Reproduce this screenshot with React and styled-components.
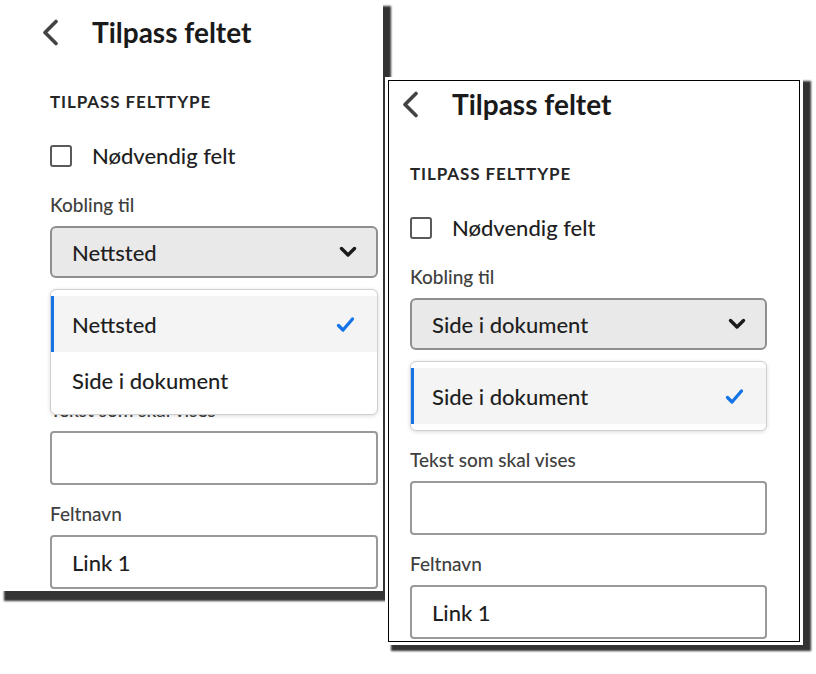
import styled, { createGlobalStyle } from "styled-components";

const GlobalStyle = createGlobalStyle`
  html, body {
    margin: 0;
    padding: 0;
    background: #ffffff;
  }
  * {
    box-sizing: border-box;
  }
`;

const panels = [
  {
    id: "left",
    selected: "Nettsted",
    options: ["Nettsted", "Side i dokument"],
    gapAfterSelect: 120,
  },
  {
    id: "right",
    selected: "Side i dokument",
    options: ["Side i dokument"],
    gapAfterSelect: 98,
  },
];

function BackIcon() {
  return (
    <svg width="16" height="27" viewBox="0 0 16 27">
      <path
        d="M14 2.5 L3 13.5 L14 24.5"
        fill="none"
        stroke="#444444"
        strokeWidth="3.6"
        strokeLinecap="round"
        strokeLinejoin="round"
      />
    </svg>
  );
}

function ChevronDown() {
  return (
    <svg width="18" height="12" viewBox="0 0 18 12">
      <path
        d="M2.5 2.5 L9 9 L15.5 2.5"
        fill="none"
        stroke="#1b1b1b"
        strokeWidth="3.4"
        strokeLinecap="round"
        strokeLinejoin="round"
      />
    </svg>
  );
}

function CheckMark() {
  return (
    <svg width="19" height="17" viewBox="0 0 19 17">
      <path
        d="M2.5 9.5 L7 14 L16.5 3"
        fill="none"
        stroke="#1473e6"
        strokeWidth="3.3"
        strokeLinecap="round"
        strokeLinejoin="round"
      />
    </svg>
  );
}

function FieldPanel({ variant, selected, options, gapAfterSelect }) {
  return (
    <Panel $variant={variant}>
      <Header>
        <BackIcon />
        <Title>Tilpass feltet</Title>
      </Header>

      <SectionTitle>TILPASS FELTTYPE</SectionTitle>

      <CheckRow>
        <CheckBox />
        <CheckLabel>Nødvendig felt</CheckLabel>
      </CheckRow>

      <Label $top={24}>Kobling til</Label>
      <SelectWrap>
        <SelectBox>
          <span>{selected}</span>
          <ChevronDown />
        </SelectBox>
        <Menu>
          {options.map((option) => (
            <MenuItem key={option} $active={option === selected}>
              <span>{option}</span>
              {option === selected && <CheckMark />}
            </MenuItem>
          ))}
        </Menu>
      </SelectWrap>

      <Label $top={gapAfterSelect}>Tekst som skal vises</Label>
      <TextInput />

      <Label $top={17}>Feltnavn</Label>
      <TextInput>Link 1</TextInput>
    </Panel>
  );
}

export default function App() {
  return (
    <Stage>
      <GlobalStyle />
      {panels.map((panel) => (
        <FieldPanel
          key={panel.id}
          variant={panel.id}
          selected={panel.selected}
          options={panel.options}
          gapAfterSelect={panel.gapAfterSelect}
        />
      ))}
    </Stage>
  );
}

const Stage = styled.div`
  position: relative;
  width: 816px;
  height: 674px;
  overflow: hidden;
  background: #ffffff;
  font-family: "Lato", "Open Sans", sans-serif;
  font-weight: 500;
  color: #1f1f1f;
`;

const Panel = styled.div`
  display: flex;
  flex-direction: column;
  background: #ffffff;
  overflow: hidden;

  ${({ $variant }) =>
    $variant === "left"
      ? `
    width: 383px;
    height: 591px;
    padding: 9px 5px 0 50px;
    box-shadow: 6px 8px 2px 2px #333333;
  `
      : `
    position: absolute;
    left: 388px;
    top: 80px;
    z-index: 2;
    width: 412px;
    height: 562px;
    padding: 0 32px 0 21px;
    border: 1px solid #000000;
    box-shadow: 0 0 0 3px #ffffff, 7px 5px 2px 4px #333333;
  `}
`;

const Header = styled.div`
  display: flex;
  align-items: center;
  gap: 34px;
  height: 46px;
  margin-left: -8px;
  flex-shrink: 0;
`;

const Title = styled.h1`
  margin: 0;
  font-size: 28px;
  line-height: 34px;
  font-weight: 700;
  color: #1a1a1a;
`;

const SectionTitle = styled.h2`
  margin: 37px 0 0;
  font-size: 17px;
  line-height: 20px;
  font-weight: 700;
  letter-spacing: 0.9px;
  color: #262626;
  flex-shrink: 0;
`;

const CheckRow = styled.label`
  display: flex;
  align-items: center;
  gap: 20px;
  height: 26px;
  margin-top: 31px;
  flex-shrink: 0;
`;

const CheckBox = styled.span`
  width: 22px;
  height: 22px;
  border: 2px solid #595959;
  border-radius: 3px;
  background: #ffffff;
`;

const CheckLabel = styled.span`
  font-size: 22px;
  line-height: 26px;
`;

const Label = styled.div`
  margin-top: ${({ $top }) => $top}px;
  font-size: 19px;
  line-height: 23px;
  color: #404040;
  flex-shrink: 0;
`;

const SelectWrap = styled.div`
  position: relative;
  margin-top: 10px;
  flex-shrink: 0;
`;

const SelectBox = styled.div`
  display: flex;
  align-items: center;
  justify-content: space-between;
  height: 52px;
  padding: 0 19px 0 20px;
  border: 2px solid #8f8f8f;
  border-radius: 6px;
  background: #e9e9e9;
  font-size: 22px;
`;

const Menu = styled.div`
  position: absolute;
  top: calc(100% + 11px);
  left: 0;
  right: 0;
  z-index: 3;
  padding: 6px 0;
  border: 1px solid #cfcfcf;
  border-radius: 6px;
  background: #ffffff;
  box-shadow: 0 1px 4px rgba(0, 0, 0, 0.14);
`;

const MenuItem = styled.div`
  display: flex;
  align-items: center;
  justify-content: space-between;
  height: 56px;
  padding: 0 22px 0 21px;
  font-size: 22px;
  background: ${({ $active }) => ($active ? "#f4f4f4" : "#ffffff")};
  box-shadow: ${({ $active }) => ($active ? "inset 3px 0 0 #1473e6" : "none")};
`;

const TextInput = styled.div`
  display: flex;
  align-items: center;
  height: 54px;
  margin-top: 10px;
  padding: 0 20px;
  border: 2px solid #999999;
  border-radius: 4px;
  background: #ffffff;
  font-size: 22px;
  flex-shrink: 0;
`;
